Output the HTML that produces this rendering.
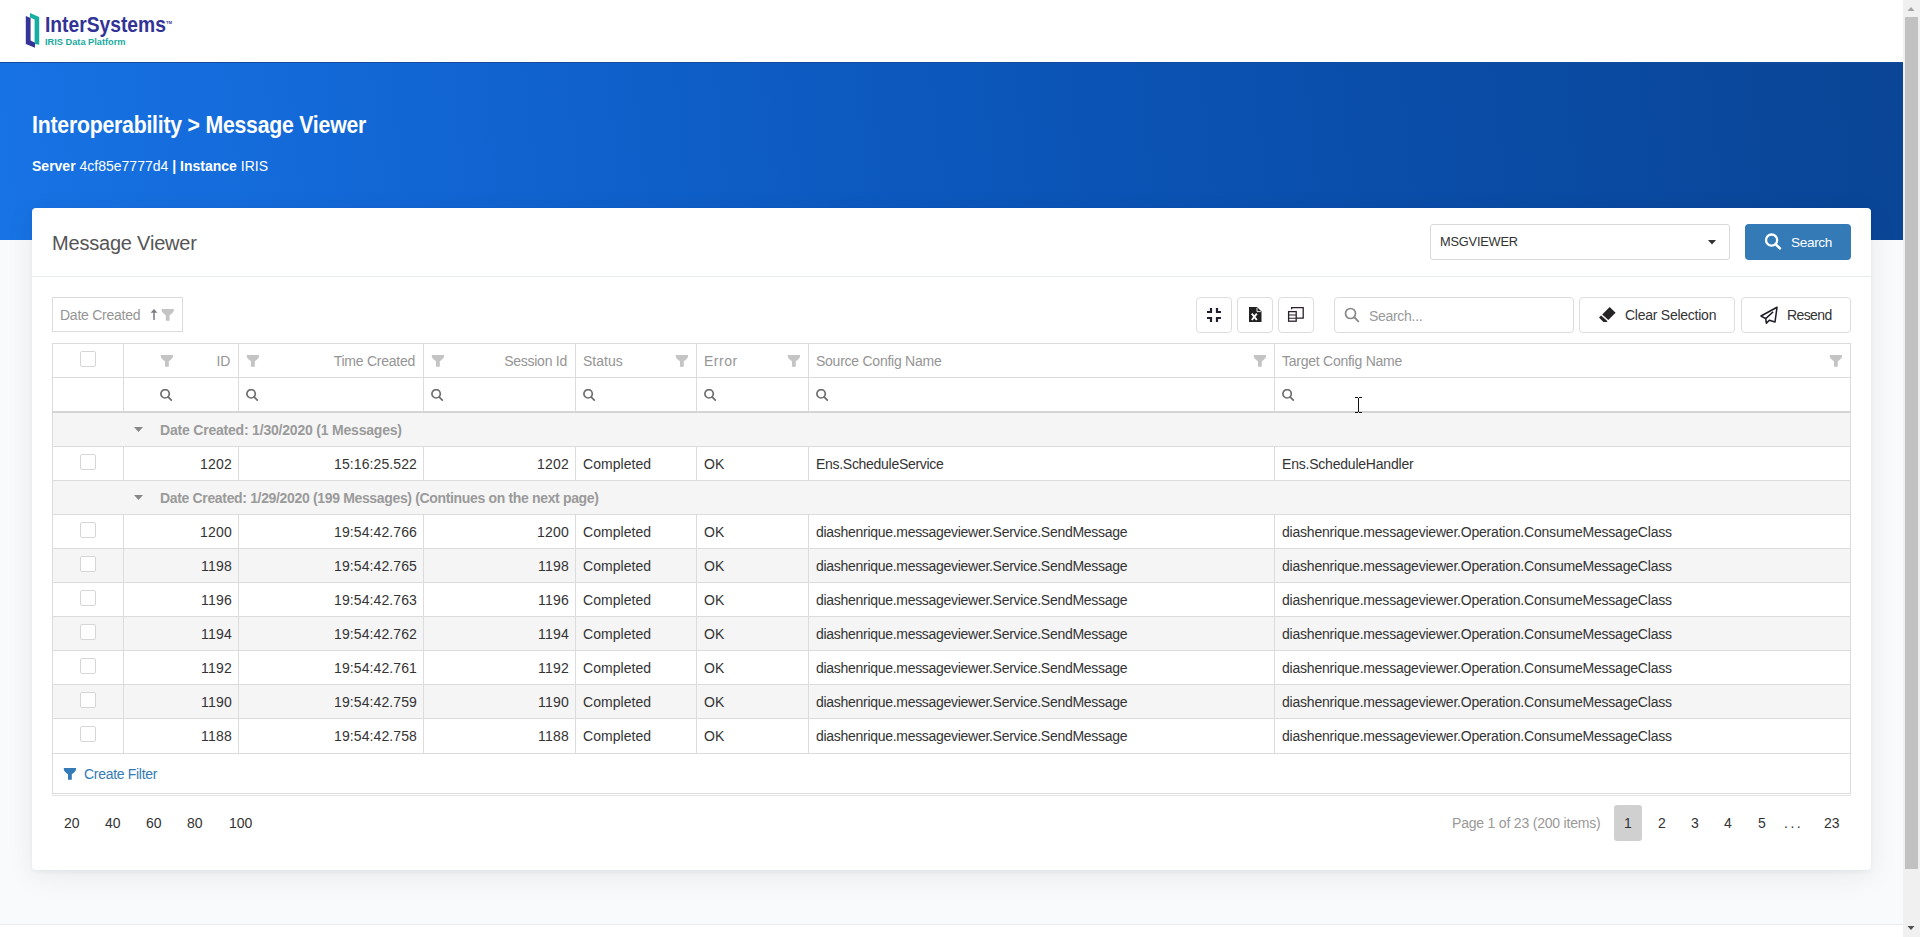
<!DOCTYPE html>
<html><head><meta charset="utf-8">
<style>
*{box-sizing:border-box;margin:0;padding:0}
html,body{width:1920px;height:937px;overflow:hidden}
body{font-family:"Liberation Sans",sans-serif;background:#f9fafb;position:relative;color:#333}
.abs{position:absolute}
#topbar{position:absolute;left:0;top:0;width:1903px;height:62px;background:#fff}
#banner{position:absolute;left:0;top:62px;width:1903px;height:178px;background:linear-gradient(84deg,#1873e4 0%,#1266d4 22%,#0c58bd 48%,#0a4eaa 72%,#0a4596 100%);border-top:1px solid #134a9c}
#h1{position:absolute;left:32px;top:112px;color:#fff;font-weight:bold;font-size:24px;letter-spacing:-0.25px;line-height:26px;white-space:nowrap;transform:scaleX(0.885);transform-origin:0 0}
#h2{position:absolute;left:32px;top:157.5px;color:#fff;font-size:14.5px;line-height:17px;white-space:nowrap;transform:scaleX(0.966);transform-origin:0 0}
#bottomline{position:absolute;left:0;top:924px;width:1903px;height:13px;background:#fff;border-top:1px solid #e9eaec}
#card{position:absolute;left:32px;top:208px;width:1839px;height:662px;background:#fff;border-radius:4px;box-shadow:0 2px 4px rgba(30,40,60,0.05),0 6px 28px rgba(30,40,60,0.08)}
#cardhdr{position:absolute;left:0;top:0;width:100%;height:69px;border-bottom:1px solid #e9ecef}
#scroll{position:absolute;left:1903px;top:0;width:17px;height:937px;background:#f0f0f0}
#thumb{position:absolute;left:2px;top:17px;width:13px;height:852px;background:#c1c1c1}
.t14{font-size:14px;white-space:nowrap}
.btn{position:absolute;border:1px solid #ddd;border-radius:4px;background:#fff}
.cell{position:absolute;height:34px;line-height:34px;font-size:14px;white-space:nowrap;letter-spacing:-0.25px}
.hb{position:absolute;background:#dcdcdc}
.chk{position:absolute;width:16px;height:16px;border:1px solid #d6d6d6;border-radius:2px;background:#fff}
.hd{color:#959595;padding-top:1px}
</style></head>
<body>
<div id="topbar">
  <svg class="abs" style="left:22px;top:10px" width="22" height="40" viewBox="22 10 22 40">
    <polygon points="30,13 39.2,17 39.2,44.8 34.6,43.9 34.6,19.6 30,17.6" fill="#16ada2"/>
    <polygon points="25.8,15.9 30.6,18.1 30.6,40.6 35,42.8 35,47.8 25.8,43.9" fill="#343597"/>
  </svg>
  <div class="abs" style="left:45px;top:13px;font-size:21.5px;font-weight:bold;color:#313396;line-height:24px;transform:scaleX(0.895);transform-origin:0 0">InterSystems</div>
  <div class="abs" style="left:166px;top:20px;font-size:4.2px;font-weight:bold;color:#333695;line-height:6px">TM</div>
  <div class="abs" style="left:44.5px;top:36.5px;font-size:9.4px;font-weight:bold;color:#1aa9a0;line-height:10px;transform:scaleX(0.985);transform-origin:0 0">IRIS Data Platform</div>
</div>
<div id="banner"></div>
<div id="h1">Interoperability &gt; Message Viewer</div>
<div id="h2"><b>Server</b> 4cf85e7777d4 <b>| Instance</b> IRIS</div>
<div id="bottomline"></div>

<div id="card">
  <div id="cardhdr"></div>
</div>
<div class="abs" style="left:52px;top:232px;font-size:20px;line-height:22px;color:#555;letter-spacing:-0.2px">Message Viewer</div>
<div class="abs" style="left:1430px;top:224px;width:300px;height:36px;border:1px solid #d9d9d9;border-radius:3px;background:#fff"></div>
<div class="abs t14" style="left:1440px;top:233px;line-height:17px;font-size:13.6px;color:#333;letter-spacing:-0.2px;transform:scaleX(0.94);transform-origin:0 0">MSGVIEWER</div>
<svg class="abs" style="left:1708px;top:240px" width="8" height="5" viewBox="0 0 8 5"><path d="M0,0 H8 L4,4.6 Z" fill="#333"/></svg>
<div class="abs" style="left:1745px;top:224px;width:106px;height:36px;border-radius:4px;background:#337ab7"></div>
<svg class="abs" style="left:1764px;top:232px" width="19" height="19" viewBox="0 0 19 19"><circle cx="7.6" cy="8.1" r="5.6" fill="none" stroke="#fff" stroke-width="2.3"/><line x1="11.8" y1="12.3" x2="15.9" y2="16.4" stroke="#fff" stroke-width="2.6" stroke-linecap="round"/></svg>
<div class="abs t14" style="left:1791px;top:234px;line-height:17px;font-size:13.6px;color:#fff;letter-spacing:-0.35px">Search</div>

<div class="btn" style="left:52px;top:297px;width:131px;height:35px;border-radius:0;border-color:#dcdcdc"></div>
<div class="abs t14" style="left:60px;top:307px;line-height:17px;color:#959595;letter-spacing:-0.25px">Date Created</div>
<svg class="abs" style="left:150px;top:308px" width="8" height="13" viewBox="0 0 8 13"><path d="M4,1 L7.4,4.8 H0.6 Z" fill="#787c84"/><rect x="3.25" y="3.5" width="1.5" height="8.5" fill="#787c84"/></svg>
<svg class="abs" style="left:161px;top:308px" width="14" height="13" viewBox="0 0 14 13"><path transform="translate(0.6,0.9)" d="M0,0 H12.2 V1.4 C12.2,3.4 9.8,5.3 8,6.3 V11.8 H4.2 V6.3 C2.4,5.3 0,3.4 0,1.4 Z" fill="#c4c4c4"/></svg>
<div class="btn" style="left:1196px;top:297px;width:36px;height:36px"></div>
<svg class="abs" style="left:1206px;top:307px" width="16" height="16" viewBox="0 0 16 16"><path d="M5,1 V5 H1 M11,1 V5 H15 M5,15 V11 H1 M11,15 V11 H15" fill="none" stroke="#1f1f2e" stroke-width="2.2"/></svg>
<div class="btn" style="left:1237px;top:297px;width:36px;height:36px"></div>
<svg class="abs" style="left:1249px;top:307px" width="13" height="15" viewBox="0 0 13 15"><path d="M0,0 H8 L12.5,4.5 V15 H0 Z" fill="#222"/><path d="M8,0.8 V4.6 H11.8" fill="none" stroke="#fff" stroke-width="0.9"/><path d="M2.8,6.6 L7.8,13 M7.8,6.6 L2.8,13" stroke="#fff" stroke-width="1.9"/></svg>
<div class="btn" style="left:1278px;top:297px;width:36px;height:36px"></div>
<svg class="abs" style="left:1287px;top:306px" width="18" height="17" viewBox="0 0 18 17"><path d="M4.6,3.2 V1.6 H16.2 V12.2 H9.2" fill="none" stroke="#2a1f2a" stroke-width="1.3"/><rect x="1.6" y="5.6" width="7.6" height="9.6" fill="none" stroke="#2a1f2a" stroke-width="1.3"/><path d="M1.6,9 H9.2 M1.6,12.2 H9.2" stroke="#2a1f2a" stroke-width="1.1"/></svg>
<div class="btn" style="left:1334px;top:297px;width:240px;height:36px;border-color:#dcdcdc"></div>
<svg class="abs" style="left:1344px;top:307px" width="16" height="16" viewBox="0 0 16 16"><circle cx="6.5" cy="6.5" r="5" fill="none" stroke="#888" stroke-width="1.7"/><line x1="10.2" y1="10.2" x2="14.3" y2="14.3" stroke="#888" stroke-width="1.9" stroke-linecap="round"/></svg>
<div class="abs t14" style="left:1369px;top:308px;line-height:17px;color:#999;letter-spacing:-0.3px">Search...</div>
<div class="btn" style="left:1579px;top:297px;width:156px;height:36px"></div>
<svg class="abs" style="left:1598px;top:306px" width="19" height="18" viewBox="0 0 19 18"><path d="M11.7,0.9 L17.6,6.7 L10.3,14 L4.2,8.4 Z" fill="#272424"/><path d="M1,11.6 L3.1,9.5 L9.5,15.3 L8.7,16 L5.4,16.1 Z" fill="#272424"/></svg>
<div class="abs t14" style="left:1625px;top:307px;line-height:17px;color:#333;letter-spacing:-0.25px">Clear Selection</div>
<div class="btn" style="left:1741px;top:297px;width:110px;height:36px"></div>
<svg class="abs" style="left:1760px;top:306px" width="19" height="19" viewBox="0 0 19 19"><path d="M1,10 L17,1.3 L15,16 L9.3,14.2 L6.4,17.3 L5.7,12.6 Z M5.7,12.6 L13.2,5.8" fill="none" stroke="#1d1d28" stroke-width="1.55" stroke-linejoin="round"/></svg>
<div class="abs t14" style="left:1787px;top:307px;line-height:17px;color:#333;letter-spacing:-0.6px">Resend</div>

<div class="hb" style="left:52px;top:343px;width:1799px;height:1px"></div>
<div class="hb" style="left:52px;top:377px;width:1799px;height:1px"></div>
<div class="hb" style="left:52px;top:411px;width:1799px;height:2px;background:#d4d4d4"></div>
<div class="hb" style="left:52px;top:343px;width:1px;height:68px"></div>
<div class="hb" style="left:123px;top:343px;width:1px;height:68px"></div>
<div class="hb" style="left:238px;top:343px;width:1px;height:68px"></div>
<div class="hb" style="left:423px;top:343px;width:1px;height:68px"></div>
<div class="hb" style="left:575px;top:343px;width:1px;height:68px"></div>
<div class="hb" style="left:696px;top:343px;width:1px;height:68px"></div>
<div class="hb" style="left:808px;top:343px;width:1px;height:68px"></div>
<div class="hb" style="left:1274px;top:343px;width:1px;height:68px"></div>
<div class="hb" style="left:1850px;top:343px;width:1px;height:68px"></div>
<div class="chk" style="left:80px;top:351px"></div>
<div class="cell hd" style="left:124px;top:343px;width:114px;text-align:right;padding-right:8px">ID</div>
<svg class="abs" style="left:160px;top:354px" width="14" height="13" viewBox="0 0 14 13"><path transform="translate(0.8,0.9)" d="M0,0 H12.2 V1.4 C12.2,3.4 9.8,5.3 8,6.3 V11.8 H4.2 V6.3 C2.4,5.3 0,3.4 0,1.4 Z" fill="#c4c4c4"/></svg>
<svg class="abs" style="left:160px;top:389px" width="13" height="13" viewBox="0 0 13 13"><circle cx="5.1" cy="4.8" r="4.2" fill="none" stroke="#6e6e6e" stroke-width="1.7"/><line x1="8.1" y1="7.8" x2="11.3" y2="11.1" stroke="#6e6e6e" stroke-width="1.7" stroke-linecap="round"/></svg>
<div class="cell hd" style="left:239px;top:343px;width:184px;text-align:right;padding-right:8px">Time Created</div>
<svg class="abs" style="left:246px;top:354px" width="14" height="13" viewBox="0 0 14 13"><path transform="translate(0.8,0.9)" d="M0,0 H12.2 V1.4 C12.2,3.4 9.8,5.3 8,6.3 V11.8 H4.2 V6.3 C2.4,5.3 0,3.4 0,1.4 Z" fill="#c4c4c4"/></svg>
<svg class="abs" style="left:246px;top:389px" width="13" height="13" viewBox="0 0 13 13"><circle cx="5.1" cy="4.8" r="4.2" fill="none" stroke="#6e6e6e" stroke-width="1.7"/><line x1="8.1" y1="7.8" x2="11.3" y2="11.1" stroke="#6e6e6e" stroke-width="1.7" stroke-linecap="round"/></svg>
<div class="cell hd" style="left:424px;top:343px;width:151px;text-align:right;padding-right:8px">Session Id</div>
<svg class="abs" style="left:431px;top:354px" width="14" height="13" viewBox="0 0 14 13"><path transform="translate(0.8,0.9)" d="M0,0 H12.2 V1.4 C12.2,3.4 9.8,5.3 8,6.3 V11.8 H4.2 V6.3 C2.4,5.3 0,3.4 0,1.4 Z" fill="#c4c4c4"/></svg>
<svg class="abs" style="left:431px;top:389px" width="13" height="13" viewBox="0 0 13 13"><circle cx="5.1" cy="4.8" r="4.2" fill="none" stroke="#6e6e6e" stroke-width="1.7"/><line x1="8.1" y1="7.8" x2="11.3" y2="11.1" stroke="#6e6e6e" stroke-width="1.7" stroke-linecap="round"/></svg>
<div class="cell hd" style="left:576px;top:343px;width:120px;padding-left:7px;letter-spacing:0px">Status</div>
<svg class="abs" style="left:675px;top:354px" width="14" height="13" viewBox="0 0 14 13"><path transform="translate(0.8,0.9)" d="M0,0 H12.2 V1.4 C12.2,3.4 9.8,5.3 8,6.3 V11.8 H4.2 V6.3 C2.4,5.3 0,3.4 0,1.4 Z" fill="#c4c4c4"/></svg>
<svg class="abs" style="left:583px;top:389px" width="13" height="13" viewBox="0 0 13 13"><circle cx="5.1" cy="4.8" r="4.2" fill="none" stroke="#6e6e6e" stroke-width="1.7"/><line x1="8.1" y1="7.8" x2="11.3" y2="11.1" stroke="#6e6e6e" stroke-width="1.7" stroke-linecap="round"/></svg>
<div class="cell hd" style="left:697px;top:343px;width:111px;padding-left:7px;letter-spacing:0.5px">Error</div>
<svg class="abs" style="left:787px;top:354px" width="14" height="13" viewBox="0 0 14 13"><path transform="translate(0.8,0.9)" d="M0,0 H12.2 V1.4 C12.2,3.4 9.8,5.3 8,6.3 V11.8 H4.2 V6.3 C2.4,5.3 0,3.4 0,1.4 Z" fill="#c4c4c4"/></svg>
<svg class="abs" style="left:704px;top:389px" width="13" height="13" viewBox="0 0 13 13"><circle cx="5.1" cy="4.8" r="4.2" fill="none" stroke="#6e6e6e" stroke-width="1.7"/><line x1="8.1" y1="7.8" x2="11.3" y2="11.1" stroke="#6e6e6e" stroke-width="1.7" stroke-linecap="round"/></svg>
<div class="cell hd" style="left:809px;top:343px;width:465px;padding-left:7px;letter-spacing:-0.25px">Source Config Name</div>
<svg class="abs" style="left:1253px;top:354px" width="14" height="13" viewBox="0 0 14 13"><path transform="translate(0.8,0.9)" d="M0,0 H12.2 V1.4 C12.2,3.4 9.8,5.3 8,6.3 V11.8 H4.2 V6.3 C2.4,5.3 0,3.4 0,1.4 Z" fill="#c4c4c4"/></svg>
<svg class="abs" style="left:816px;top:389px" width="13" height="13" viewBox="0 0 13 13"><circle cx="5.1" cy="4.8" r="4.2" fill="none" stroke="#6e6e6e" stroke-width="1.7"/><line x1="8.1" y1="7.8" x2="11.3" y2="11.1" stroke="#6e6e6e" stroke-width="1.7" stroke-linecap="round"/></svg>
<div class="cell hd" style="left:1275px;top:343px;width:575px;padding-left:7px;letter-spacing:-0.25px">Target Config Name</div>
<svg class="abs" style="left:1829px;top:354px" width="14" height="13" viewBox="0 0 14 13"><path transform="translate(0.8,0.9)" d="M0,0 H12.2 V1.4 C12.2,3.4 9.8,5.3 8,6.3 V11.8 H4.2 V6.3 C2.4,5.3 0,3.4 0,1.4 Z" fill="#c4c4c4"/></svg>
<svg class="abs" style="left:1282px;top:389px" width="13" height="13" viewBox="0 0 13 13"><circle cx="5.1" cy="4.8" r="4.2" fill="none" stroke="#6e6e6e" stroke-width="1.7"/><line x1="8.1" y1="7.8" x2="11.3" y2="11.1" stroke="#6e6e6e" stroke-width="1.7" stroke-linecap="round"/></svg>
<div class="abs" style="left:52px;top:413px;width:1799px;height:33px;background:#f5f5f5;border-left:1px solid #dcdcdc;border-right:1px solid #dcdcdc"></div>
<div class="hb" style="left:52px;top:446px;width:1799px;height:1px"></div>
<svg class="abs" style="left:134px;top:427px" width="9" height="5" viewBox="0 0 9 5"><path d="M0,0 H9 L4.5,5 Z" fill="#888"/></svg>
<div class="cell" style="left:160px;top:413px;font-weight:bold;color:#9a9a9a;letter-spacing:-0.2px">Date Created: 1/30/2020 (1 Messages)</div>
<div class="abs" style="left:52px;top:447px;width:1799px;height:33px;background:#fff"></div>
<div class="hb" style="left:52px;top:480px;width:1799px;height:1px"></div>
<div class="hb" style="left:52px;top:447px;width:1px;height:33px"></div>
<div class="hb" style="left:123px;top:447px;width:1px;height:33px"></div>
<div class="hb" style="left:238px;top:447px;width:1px;height:33px"></div>
<div class="hb" style="left:423px;top:447px;width:1px;height:33px"></div>
<div class="hb" style="left:575px;top:447px;width:1px;height:33px"></div>
<div class="hb" style="left:696px;top:447px;width:1px;height:33px"></div>
<div class="hb" style="left:808px;top:447px;width:1px;height:33px"></div>
<div class="hb" style="left:1274px;top:447px;width:1px;height:33px"></div>
<div class="hb" style="left:1850px;top:447px;width:1px;height:33px"></div>
<div class="chk" style="left:80px;top:454px"></div>
<div class="cell" style="left:124px;top:447px;width:114px;text-align:right;padding-right:6px;letter-spacing:0.2px">1202</div>
<div class="cell" style="left:239px;top:447px;width:184px;text-align:right;padding-right:6px;letter-spacing:0.1px">15:16:25.522</div>
<div class="cell" style="left:424px;top:447px;width:151px;text-align:right;padding-right:6px;letter-spacing:0.2px">1202</div>
<div class="cell" style="left:583px;top:447px;letter-spacing:0.05px">Completed</div>
<div class="cell" style="left:704px;top:447px;letter-spacing:0.2px">OK</div>
<div class="cell" style="left:816px;top:447px;letter-spacing:-0.29px">Ens.ScheduleService</div>
<div class="cell" style="left:1282px;top:447px;letter-spacing:-0.21px">Ens.ScheduleHandler</div>
<div class="abs" style="left:52px;top:481px;width:1799px;height:33px;background:#f5f5f5;border-left:1px solid #dcdcdc;border-right:1px solid #dcdcdc"></div>
<div class="hb" style="left:52px;top:514px;width:1799px;height:1px"></div>
<svg class="abs" style="left:134px;top:495px" width="9" height="5" viewBox="0 0 9 5"><path d="M0,0 H9 L4.5,5 Z" fill="#888"/></svg>
<div class="cell" style="left:160px;top:481px;font-weight:bold;color:#9a9a9a;letter-spacing:-0.34px">Date Created: 1/29/2020 (199 Messages) (Continues on the next page)</div>
<div class="abs" style="left:52px;top:515px;width:1799px;height:33px;background:#fff"></div>
<div class="hb" style="left:52px;top:548px;width:1799px;height:1px"></div>
<div class="hb" style="left:52px;top:515px;width:1px;height:33px"></div>
<div class="hb" style="left:123px;top:515px;width:1px;height:33px"></div>
<div class="hb" style="left:238px;top:515px;width:1px;height:33px"></div>
<div class="hb" style="left:423px;top:515px;width:1px;height:33px"></div>
<div class="hb" style="left:575px;top:515px;width:1px;height:33px"></div>
<div class="hb" style="left:696px;top:515px;width:1px;height:33px"></div>
<div class="hb" style="left:808px;top:515px;width:1px;height:33px"></div>
<div class="hb" style="left:1274px;top:515px;width:1px;height:33px"></div>
<div class="hb" style="left:1850px;top:515px;width:1px;height:33px"></div>
<div class="chk" style="left:80px;top:522px"></div>
<div class="cell" style="left:124px;top:515px;width:114px;text-align:right;padding-right:6px;letter-spacing:0.2px">1200</div>
<div class="cell" style="left:239px;top:515px;width:184px;text-align:right;padding-right:6px;letter-spacing:0.1px">19:54:42.766</div>
<div class="cell" style="left:424px;top:515px;width:151px;text-align:right;padding-right:6px;letter-spacing:0.2px">1200</div>
<div class="cell" style="left:583px;top:515px;letter-spacing:0.05px">Completed</div>
<div class="cell" style="left:704px;top:515px;letter-spacing:0.2px">OK</div>
<div class="cell" style="left:816px;top:515px;letter-spacing:-0.29px">diashenrique.messageviewer.Service.SendMessage</div>
<div class="cell" style="left:1282px;top:515px;letter-spacing:-0.21px">diashenrique.messageviewer.Operation.ConsumeMessageClass</div>
<div class="abs" style="left:52px;top:549px;width:1799px;height:33px;background:#f5f5f5"></div>
<div class="hb" style="left:52px;top:582px;width:1799px;height:1px"></div>
<div class="hb" style="left:52px;top:549px;width:1px;height:33px"></div>
<div class="hb" style="left:123px;top:549px;width:1px;height:33px"></div>
<div class="hb" style="left:238px;top:549px;width:1px;height:33px"></div>
<div class="hb" style="left:423px;top:549px;width:1px;height:33px"></div>
<div class="hb" style="left:575px;top:549px;width:1px;height:33px"></div>
<div class="hb" style="left:696px;top:549px;width:1px;height:33px"></div>
<div class="hb" style="left:808px;top:549px;width:1px;height:33px"></div>
<div class="hb" style="left:1274px;top:549px;width:1px;height:33px"></div>
<div class="hb" style="left:1850px;top:549px;width:1px;height:33px"></div>
<div class="chk" style="left:80px;top:556px"></div>
<div class="cell" style="left:124px;top:549px;width:114px;text-align:right;padding-right:6px;letter-spacing:0.2px">1198</div>
<div class="cell" style="left:239px;top:549px;width:184px;text-align:right;padding-right:6px;letter-spacing:0.1px">19:54:42.765</div>
<div class="cell" style="left:424px;top:549px;width:151px;text-align:right;padding-right:6px;letter-spacing:0.2px">1198</div>
<div class="cell" style="left:583px;top:549px;letter-spacing:0.05px">Completed</div>
<div class="cell" style="left:704px;top:549px;letter-spacing:0.2px">OK</div>
<div class="cell" style="left:816px;top:549px;letter-spacing:-0.29px">diashenrique.messageviewer.Service.SendMessage</div>
<div class="cell" style="left:1282px;top:549px;letter-spacing:-0.21px">diashenrique.messageviewer.Operation.ConsumeMessageClass</div>
<div class="abs" style="left:52px;top:583px;width:1799px;height:33px;background:#fff"></div>
<div class="hb" style="left:52px;top:616px;width:1799px;height:1px"></div>
<div class="hb" style="left:52px;top:583px;width:1px;height:33px"></div>
<div class="hb" style="left:123px;top:583px;width:1px;height:33px"></div>
<div class="hb" style="left:238px;top:583px;width:1px;height:33px"></div>
<div class="hb" style="left:423px;top:583px;width:1px;height:33px"></div>
<div class="hb" style="left:575px;top:583px;width:1px;height:33px"></div>
<div class="hb" style="left:696px;top:583px;width:1px;height:33px"></div>
<div class="hb" style="left:808px;top:583px;width:1px;height:33px"></div>
<div class="hb" style="left:1274px;top:583px;width:1px;height:33px"></div>
<div class="hb" style="left:1850px;top:583px;width:1px;height:33px"></div>
<div class="chk" style="left:80px;top:590px"></div>
<div class="cell" style="left:124px;top:583px;width:114px;text-align:right;padding-right:6px;letter-spacing:0.2px">1196</div>
<div class="cell" style="left:239px;top:583px;width:184px;text-align:right;padding-right:6px;letter-spacing:0.1px">19:54:42.763</div>
<div class="cell" style="left:424px;top:583px;width:151px;text-align:right;padding-right:6px;letter-spacing:0.2px">1196</div>
<div class="cell" style="left:583px;top:583px;letter-spacing:0.05px">Completed</div>
<div class="cell" style="left:704px;top:583px;letter-spacing:0.2px">OK</div>
<div class="cell" style="left:816px;top:583px;letter-spacing:-0.29px">diashenrique.messageviewer.Service.SendMessage</div>
<div class="cell" style="left:1282px;top:583px;letter-spacing:-0.21px">diashenrique.messageviewer.Operation.ConsumeMessageClass</div>
<div class="abs" style="left:52px;top:617px;width:1799px;height:33px;background:#f5f5f5"></div>
<div class="hb" style="left:52px;top:650px;width:1799px;height:1px"></div>
<div class="hb" style="left:52px;top:617px;width:1px;height:33px"></div>
<div class="hb" style="left:123px;top:617px;width:1px;height:33px"></div>
<div class="hb" style="left:238px;top:617px;width:1px;height:33px"></div>
<div class="hb" style="left:423px;top:617px;width:1px;height:33px"></div>
<div class="hb" style="left:575px;top:617px;width:1px;height:33px"></div>
<div class="hb" style="left:696px;top:617px;width:1px;height:33px"></div>
<div class="hb" style="left:808px;top:617px;width:1px;height:33px"></div>
<div class="hb" style="left:1274px;top:617px;width:1px;height:33px"></div>
<div class="hb" style="left:1850px;top:617px;width:1px;height:33px"></div>
<div class="chk" style="left:80px;top:624px"></div>
<div class="cell" style="left:124px;top:617px;width:114px;text-align:right;padding-right:6px;letter-spacing:0.2px">1194</div>
<div class="cell" style="left:239px;top:617px;width:184px;text-align:right;padding-right:6px;letter-spacing:0.1px">19:54:42.762</div>
<div class="cell" style="left:424px;top:617px;width:151px;text-align:right;padding-right:6px;letter-spacing:0.2px">1194</div>
<div class="cell" style="left:583px;top:617px;letter-spacing:0.05px">Completed</div>
<div class="cell" style="left:704px;top:617px;letter-spacing:0.2px">OK</div>
<div class="cell" style="left:816px;top:617px;letter-spacing:-0.29px">diashenrique.messageviewer.Service.SendMessage</div>
<div class="cell" style="left:1282px;top:617px;letter-spacing:-0.21px">diashenrique.messageviewer.Operation.ConsumeMessageClass</div>
<div class="abs" style="left:52px;top:651px;width:1799px;height:33px;background:#fff"></div>
<div class="hb" style="left:52px;top:684px;width:1799px;height:1px"></div>
<div class="hb" style="left:52px;top:651px;width:1px;height:33px"></div>
<div class="hb" style="left:123px;top:651px;width:1px;height:33px"></div>
<div class="hb" style="left:238px;top:651px;width:1px;height:33px"></div>
<div class="hb" style="left:423px;top:651px;width:1px;height:33px"></div>
<div class="hb" style="left:575px;top:651px;width:1px;height:33px"></div>
<div class="hb" style="left:696px;top:651px;width:1px;height:33px"></div>
<div class="hb" style="left:808px;top:651px;width:1px;height:33px"></div>
<div class="hb" style="left:1274px;top:651px;width:1px;height:33px"></div>
<div class="hb" style="left:1850px;top:651px;width:1px;height:33px"></div>
<div class="chk" style="left:80px;top:658px"></div>
<div class="cell" style="left:124px;top:651px;width:114px;text-align:right;padding-right:6px;letter-spacing:0.2px">1192</div>
<div class="cell" style="left:239px;top:651px;width:184px;text-align:right;padding-right:6px;letter-spacing:0.1px">19:54:42.761</div>
<div class="cell" style="left:424px;top:651px;width:151px;text-align:right;padding-right:6px;letter-spacing:0.2px">1192</div>
<div class="cell" style="left:583px;top:651px;letter-spacing:0.05px">Completed</div>
<div class="cell" style="left:704px;top:651px;letter-spacing:0.2px">OK</div>
<div class="cell" style="left:816px;top:651px;letter-spacing:-0.29px">diashenrique.messageviewer.Service.SendMessage</div>
<div class="cell" style="left:1282px;top:651px;letter-spacing:-0.21px">diashenrique.messageviewer.Operation.ConsumeMessageClass</div>
<div class="abs" style="left:52px;top:685px;width:1799px;height:33px;background:#f5f5f5"></div>
<div class="hb" style="left:52px;top:718px;width:1799px;height:1px"></div>
<div class="hb" style="left:52px;top:685px;width:1px;height:33px"></div>
<div class="hb" style="left:123px;top:685px;width:1px;height:33px"></div>
<div class="hb" style="left:238px;top:685px;width:1px;height:33px"></div>
<div class="hb" style="left:423px;top:685px;width:1px;height:33px"></div>
<div class="hb" style="left:575px;top:685px;width:1px;height:33px"></div>
<div class="hb" style="left:696px;top:685px;width:1px;height:33px"></div>
<div class="hb" style="left:808px;top:685px;width:1px;height:33px"></div>
<div class="hb" style="left:1274px;top:685px;width:1px;height:33px"></div>
<div class="hb" style="left:1850px;top:685px;width:1px;height:33px"></div>
<div class="chk" style="left:80px;top:692px"></div>
<div class="cell" style="left:124px;top:685px;width:114px;text-align:right;padding-right:6px;letter-spacing:0.2px">1190</div>
<div class="cell" style="left:239px;top:685px;width:184px;text-align:right;padding-right:6px;letter-spacing:0.1px">19:54:42.759</div>
<div class="cell" style="left:424px;top:685px;width:151px;text-align:right;padding-right:6px;letter-spacing:0.2px">1190</div>
<div class="cell" style="left:583px;top:685px;letter-spacing:0.05px">Completed</div>
<div class="cell" style="left:704px;top:685px;letter-spacing:0.2px">OK</div>
<div class="cell" style="left:816px;top:685px;letter-spacing:-0.29px">diashenrique.messageviewer.Service.SendMessage</div>
<div class="cell" style="left:1282px;top:685px;letter-spacing:-0.21px">diashenrique.messageviewer.Operation.ConsumeMessageClass</div>
<div class="abs" style="left:52px;top:719px;width:1799px;height:34px;background:#fff"></div>
<div class="hb" style="left:52px;top:753px;width:1799px;height:1px"></div>
<div class="hb" style="left:52px;top:719px;width:1px;height:34px"></div>
<div class="hb" style="left:123px;top:719px;width:1px;height:34px"></div>
<div class="hb" style="left:238px;top:719px;width:1px;height:34px"></div>
<div class="hb" style="left:423px;top:719px;width:1px;height:34px"></div>
<div class="hb" style="left:575px;top:719px;width:1px;height:34px"></div>
<div class="hb" style="left:696px;top:719px;width:1px;height:34px"></div>
<div class="hb" style="left:808px;top:719px;width:1px;height:34px"></div>
<div class="hb" style="left:1274px;top:719px;width:1px;height:34px"></div>
<div class="hb" style="left:1850px;top:719px;width:1px;height:34px"></div>
<div class="chk" style="left:80px;top:726px"></div>
<div class="cell" style="left:124px;top:719px;width:114px;text-align:right;padding-right:6px;letter-spacing:0.2px">1188</div>
<div class="cell" style="left:239px;top:719px;width:184px;text-align:right;padding-right:6px;letter-spacing:0.1px">19:54:42.758</div>
<div class="cell" style="left:424px;top:719px;width:151px;text-align:right;padding-right:6px;letter-spacing:0.2px">1188</div>
<div class="cell" style="left:583px;top:719px;letter-spacing:0.05px">Completed</div>
<div class="cell" style="left:704px;top:719px;letter-spacing:0.2px">OK</div>
<div class="cell" style="left:816px;top:719px;letter-spacing:-0.29px">diashenrique.messageviewer.Service.SendMessage</div>
<div class="cell" style="left:1282px;top:719px;letter-spacing:-0.21px">diashenrique.messageviewer.Operation.ConsumeMessageClass</div>
<div class="abs" style="left:52px;top:754px;width:1799px;height:40px;border:1px solid #dcdcdc;border-top:none;background:#fff"></div>
<div class="hb" style="left:52px;top:795px;width:1799px;height:1px;background:#e3e3e3"></div>
<svg class="abs" style="left:63px;top:767px" width="14" height="13" viewBox="0 0 14 13"><path transform="translate(0.8,0.9)" d="M0,0 H12.2 V1.4 C12.2,3.4 9.8,5.3 8,6.3 V11.8 H4.2 V6.3 C2.4,5.3 0,3.4 0,1.4 Z" fill="#337ab7"/></svg>
<div class="abs t14" style="left:84px;top:766px;line-height:17px;color:#337ab7;letter-spacing:-0.3px">Create Filter</div>
<div class="abs t14" style="left:64px;top:815px;line-height:17px;color:#333">20</div>
<div class="abs t14" style="left:105px;top:815px;line-height:17px;color:#333">40</div>
<div class="abs t14" style="left:146px;top:815px;line-height:17px;color:#333">60</div>
<div class="abs t14" style="left:187px;top:815px;line-height:17px;color:#333">80</div>
<div class="abs t14" style="left:229px;top:815px;line-height:17px;color:#333">100</div>
<div class="abs t14" style="left:1452px;top:815px;line-height:17px;color:#999;letter-spacing:-0.2px">Page 1 of 23 (200 items)</div>
<div class="abs" style="left:1614px;top:805px;width:28px;height:36px;border-radius:3px;background:#d0d0d0"></div>
<div class="abs t14" style="left:1614px;top:815px;width:28px;text-align:center;line-height:17px;color:#333">1</div>
<div class="abs t14" style="left:1648px;top:815px;width:28px;text-align:center;line-height:17px;color:#333">2</div>
<div class="abs t14" style="left:1681px;top:815px;width:28px;text-align:center;line-height:17px;color:#333">3</div>
<div class="abs t14" style="left:1714px;top:815px;width:28px;text-align:center;line-height:17px;color:#333">4</div>
<div class="abs t14" style="left:1748px;top:815px;width:28px;text-align:center;line-height:17px;color:#333">5</div>
<div class="abs t14" style="left:1784px;top:815px;line-height:17px;color:#333;letter-spacing:2.5px">...</div>
<div class="abs t14" style="left:1824px;top:815px;line-height:17px;color:#333">23</div>

<div class="abs" style="left:1355px;top:397px;width:3px;height:1px;background:#111"></div><div class="abs" style="left:1359px;top:397px;width:3px;height:1px;background:#111"></div><div class="abs" style="left:1358px;top:398px;width:1px;height:14px;background:#111"></div><div class="abs" style="left:1355px;top:412px;width:3px;height:1px;background:#111"></div><div class="abs" style="left:1359px;top:412px;width:3px;height:1px;background:#111"></div>


<div id="scroll"><div id="thumb"></div>
<svg class="abs" style="left:0;top:0" width="17" height="17" viewBox="0 0 17 17"><path d="M4.5,11 H11.5 L8,7 Z" fill="#a3a3a3"/></svg>
<svg class="abs" style="left:0;top:920px" width="17" height="17" viewBox="0 0 17 17"><path d="M4.5,6 H11.5 L8,10 Z" fill="#505050"/></svg>
</div>
</body></html>
